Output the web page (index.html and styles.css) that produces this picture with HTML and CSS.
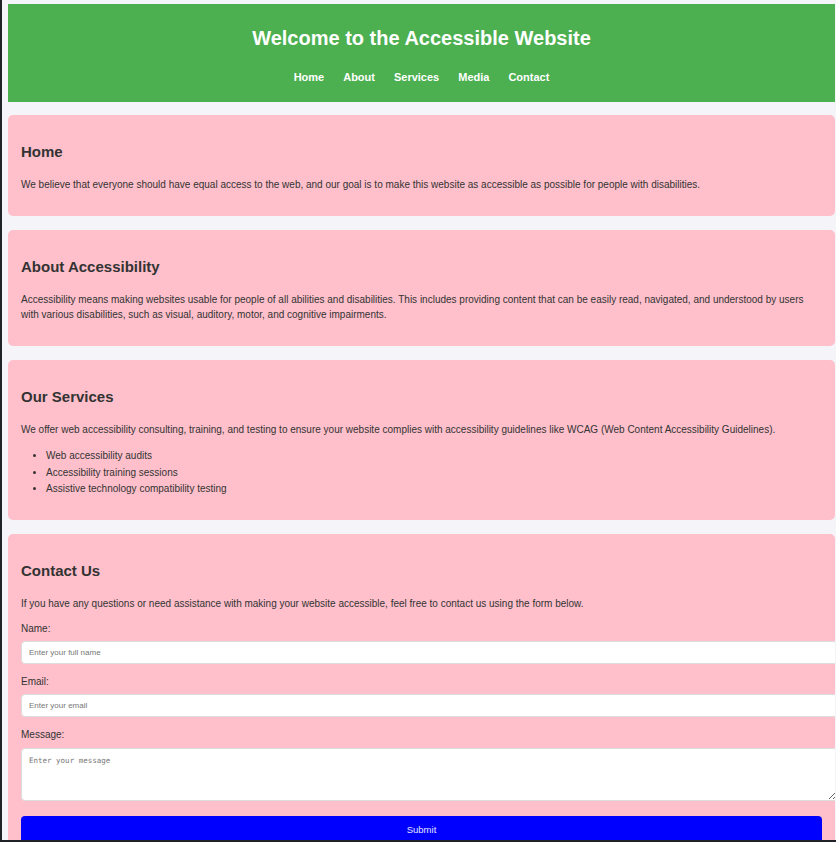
FILE: index.html
```html
<!DOCTYPE html>
<html lang="en">
<head>
<meta charset="utf-8">
<title>Accessible Website</title>
<link rel="stylesheet" href="styles.css">
</head>
<body>
<header class="site-header">
  <h1 class="site-title">Welcome to the Accessible Website</h1>
  <nav class="site-nav">
    <a href="#home">Home</a>
    <a href="#about">About</a>
    <a href="#services">Services</a>
    <a href="#media">Media</a>
    <a href="#contact">Contact</a>
  </nav>
</header>
<main class="content">
  <section class="card" id="home">
    <h2>Home</h2>
    <p>We believe that everyone should have equal access to the web, and our goal is to make this website as accessible as possible for people with disabilities.</p>
  </section>
  <section class="card" id="about">
    <h2>About Accessibility</h2>
    <p>Accessibility means making websites usable for people of all abilities and disabilities. This includes providing content that can be easily read, navigated, and understood by users with various disabilities, such as visual, auditory, motor, and cognitive impairments.</p>
  </section>
  <section class="card" id="services">
    <h2>Our Services</h2>
    <p>We offer web accessibility consulting, training, and testing to ensure your website complies with accessibility guidelines like WCAG (Web Content Accessibility Guidelines).</p>
    <ul class="service-list">
      <li>Web accessibility audits</li>
      <li>Accessibility training sessions</li>
      <li>Assistive technology compatibility testing</li>
    </ul>
  </section>
  <section class="card" id="contact">
    <h2>Contact Us</h2>
    <p>If you have any questions or need assistance with making your website accessible, feel free to contact us using the form below.</p>
    <form class="contact-form">
      <label for="name">Name:</label>
      <input class="field" type="text" id="name" placeholder="Enter your full name">
      <label for="email">Email:</label>
      <input class="field" type="email" id="email" placeholder="Enter your email">
      <label for="message">Message:</label>
      <textarea class="field area" id="message" placeholder="Enter your message"></textarea>
      <button class="submit" type="submit">Submit</button>
    </form>
  </section>
</main>
</body>
</html>
```

FILE: styles.css
```css
html {
  overflow: hidden;
  background: #f4f4f9;
}

body {
  margin: 4px 1px 0 8px;
  font-family: "Liberation Sans", Arial, sans-serif;
  color: #333;
  background: #f4f4f9;
}

body::after {
  content: "";
  position: fixed;
  inset: 0;
  border-left: 2px solid #1f2328;
  border-bottom: 2px solid #1f2328;
  pointer-events: none;
}

.site-header {
  background: #4caf50;
  color: #fff;
  text-align: center;
  padding: 22px 0 18px;
}

.site-title {
  margin: 0;
  font-size: 20px;
  line-height: 24px;
  font-weight: bold;
}

.site-nav {
  margin-top: 20px;
  display: flex;
  justify-content: center;
  gap: 19px;
  line-height: 14px;
}

.site-nav a {
  color: #fff;
  text-decoration: none;
  font-weight: bold;
  font-size: 11px;
}

.content {
  display: flex;
  flex-direction: column;
  gap: 14px;
  margin-top: 13px;
}

.card {
  background: #ffc0cb;
  border-radius: 5px;
  padding: 13px;
}

.card h2 {
  margin: 15px 0 16px;
  font-size: 15px;
  line-height: 18px;
  color: #333;
}

.card p {
  margin: 0 0 11px;
  font-size: 10px;
  line-height: 15px;
  color: #333;
}

.service-list {
  margin: 0 0 9px;
  padding-left: 25px;
  font-size: 10px;
  line-height: 16.5px;
}

.contact-form {
  display: flex;
  flex-direction: column;
  align-items: flex-start;
  margin-top: 12px;
}

.contact-form label {
  font-size: 10px;
  line-height: 12px;
  margin-bottom: 6px;
}

.field {
  box-sizing: content-box;
  width: 100%;
  height: 21px;
  padding: 0 7px;
  margin: 0 0 12px;
  border: 1px solid #ddd;
  border-radius: 4px;
  background: #fff;
  font-family: "Liberation Sans", Arial, sans-serif;
  font-size: 8px;
  color: #333;
}

.field::placeholder {
  color: #777;
}

.area {
  height: 37px;
  padding: 7px;
  margin-top: 1px;
  font-family: "DejaVu Sans Mono", monospace;
  font-size: 7.5px;
  resize: vertical;
  margin-bottom: 15px;
}

.submit {
  width: 100%;
  height: 27px;
  border: none;
  border-radius: 4px;
  background: #0000ff;
  color: #e4e4ff;
  font-family: "Liberation Sans", Arial, sans-serif;
  font-size: 9.5px;
  cursor: pointer;
}
```
